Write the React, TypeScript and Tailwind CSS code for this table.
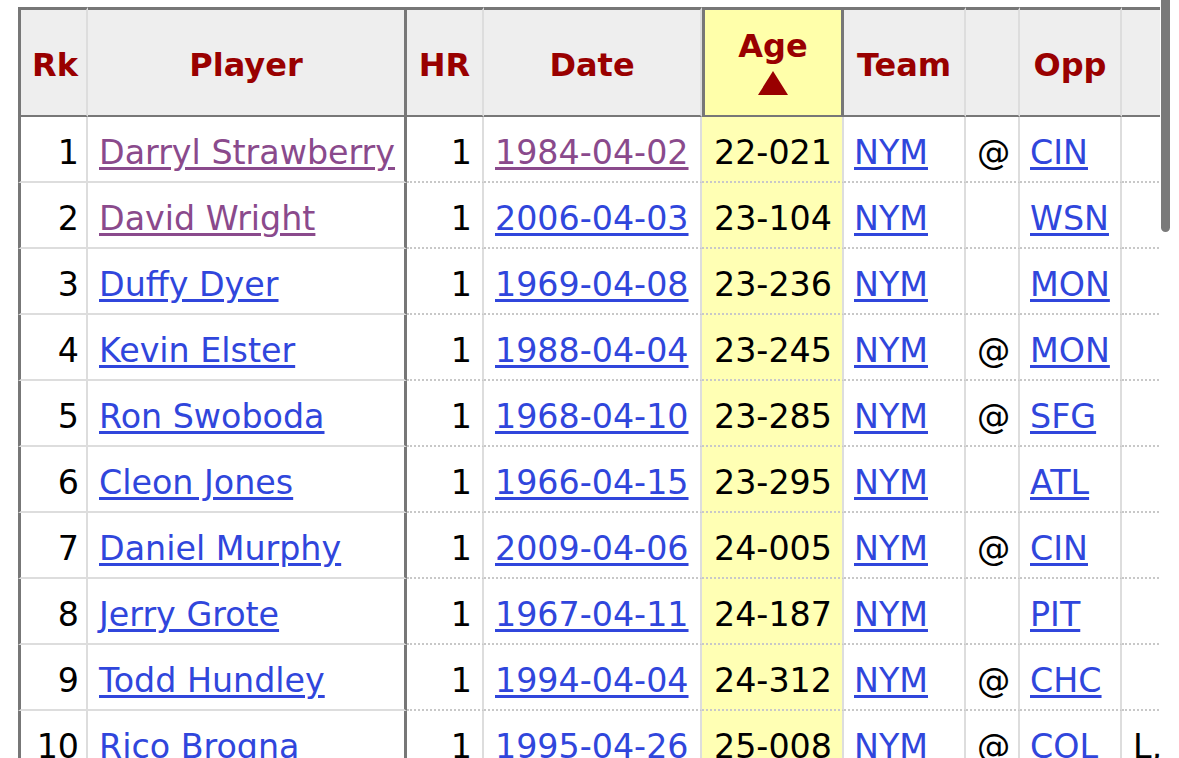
import React from 'react';

type Row = {
  rk: number;
  player: string;
  date: string;
  age: string;
  at: boolean;
  opp: string;
  visitedPlayer?: boolean;
  visitedDate?: boolean;
  extra?: string;
};

const rows: Row[] = [
  { rk: 1, player: 'Darryl Strawberry', date: '1984-04-02', age: '22-021', at: true, opp: 'CIN', visitedPlayer: true, visitedDate: true },
  { rk: 2, player: 'David Wright', date: '2006-04-03', age: '23-104', at: false, opp: 'WSN', visitedPlayer: true },
  { rk: 3, player: 'Duffy Dyer', date: '1969-04-08', age: '23-236', at: false, opp: 'MON' },
  { rk: 4, player: 'Kevin Elster', date: '1988-04-04', age: '23-245', at: true, opp: 'MON' },
  { rk: 5, player: 'Ron Swoboda', date: '1968-04-10', age: '23-285', at: true, opp: 'SFG' },
  { rk: 6, player: 'Cleon Jones', date: '1966-04-15', age: '23-295', at: false, opp: 'ATL' },
  { rk: 7, player: 'Daniel Murphy', date: '2009-04-06', age: '24-005', at: true, opp: 'CIN' },
  { rk: 8, player: 'Jerry Grote', date: '1967-04-11', age: '24-187', at: false, opp: 'PIT' },
  { rk: 9, player: 'Todd Hundley', date: '1994-04-04', age: '24-312', at: true, opp: 'CHC' },
  { rk: 10, player: 'Rico Brogna', date: '1995-04-26', age: '25-008', at: true, opp: 'COL', extra: 'L,' },
];

const link = 'underline decoration-[3px] underline-offset-[3px] text-[#3046dc]';
const visited = 'underline decoration-[3px] underline-offset-[3px] text-[#8a4a8c]';

// header cell base
const th =
  'bg-[#eeeeee] border-t-[3px] border-t-[#777777] border-b-2 border-b-[#777777] border-r-2 border-r-[#dddddd] text-[#990000] font-bold text-[32px] text-center align-middle px-[11px] pt-[5px]';

// data cell bases
const solidTd = 'border-b-2 border-b-[#dddddd] align-middle px-[11px] pt-[7px] whitespace-nowrap';
const dotTd =
  'border-b-2 border-b-[#c8c8c8] [border-bottom-style:dotted] border-r-2 border-r-[#dddddd] align-middle px-[11px] pt-[7px] whitespace-nowrap';

const App = () => {
  return (
    <div
      className="relative h-[758px] w-[1179px] overflow-hidden bg-white text-black"
      style={{ fontFamily: '"DejaVu Sans", Verdana, sans-serif' }}
    >
      {/* scroll indicator on the right */}
      <div className="absolute left-[1161px] top-[-20px] h-[252px] w-[9px] rounded-full bg-[#7a7a7a]" />

      <div className="w-[1160px] overflow-hidden pl-[18px] pt-[7px]">
        <table className="w-[1224px] table-fixed border-separate border-spacing-0 text-[33.3px] leading-[40px]">
          <colgroup>
            <col className="w-[70px]" />
            <col className="w-[319px]" />
            <col className="w-[77px]" />
            <col className="w-[218px]" />
            <col className="w-[142px]" />
            <col className="w-[122px]" />
            <col className="w-[54px]" />
            <col className="w-[102px]" />
            <col className="w-[120px]" />
          </colgroup>
          <thead>
            <tr className="h-[110px]">
              <th className={`${th} border-l-[3px] border-l-[#777777]`}>Rk</th>
              <th className={`${th} !border-r-[3px] !border-r-[#777777]`}>Player</th>
              <th className={th}>HR</th>
              <th className={th}>Date</th>
              <th className={`${th} !bg-[#ffffaa] border-l-[3px] border-l-[#777777] !border-r-[3px] !border-r-[#777777] !pt-0`}>
                <div className="-mt-[2px] flex flex-col items-center">
                  <span className="leading-[36px]">Age</span>
                  <svg width="30" height="24" viewBox="0 0 30 24" className="mt-[7px]">
                    <polygon points="15,0 30,24 0,24" fill="#990000" />
                  </svg>
                </div>
              </th>
              <th className={th}>Team</th>
              <th className={th}></th>
              <th className={th}>Opp</th>
              <th className={th}></th>
            </tr>
          </thead>
          <tbody>
            {rows.map(r => (
              <tr key={r.rk} className="h-[66px]">
                <td className={`${solidTd} border-l-[3px] border-l-[#777777] border-r-2 border-r-[#dddddd] text-right !pr-[7px]`}>
                  {r.rk}
                </td>
                <td className={`${solidTd} border-r-[3px] border-r-[#777777] !pl-[11px]`}>
                  <span className={r.visitedPlayer ? visited : link}>{r.player}</span>
                </td>
                <td className={`${dotTd} text-right !pr-[10px]`}>1</td>
                <td className={dotTd}>
                  <span className={r.visitedDate ? visited : link}>{r.date}</span>
                </td>
                <td className={`${dotTd} bg-[#ffffb4] !pl-[12px]`}>{r.age}</td>
                <td className={`${dotTd} !pl-[10px]`}>
                  <span className={link}>NYM</span>
                </td>
                <td className={`${dotTd} text-center`}>{r.at ? '@' : ''}</td>
                <td className={`${dotTd} !pl-[10px]`}>
                  <span className={link}>{r.opp}</span>
                </td>
                <td className={`${dotTd} !pl-[11px]`}>{r.extra ?? ''}</td>
              </tr>
            ))}
          </tbody>
        </table>
      </div>
    </div>
  );
};

export default App;
